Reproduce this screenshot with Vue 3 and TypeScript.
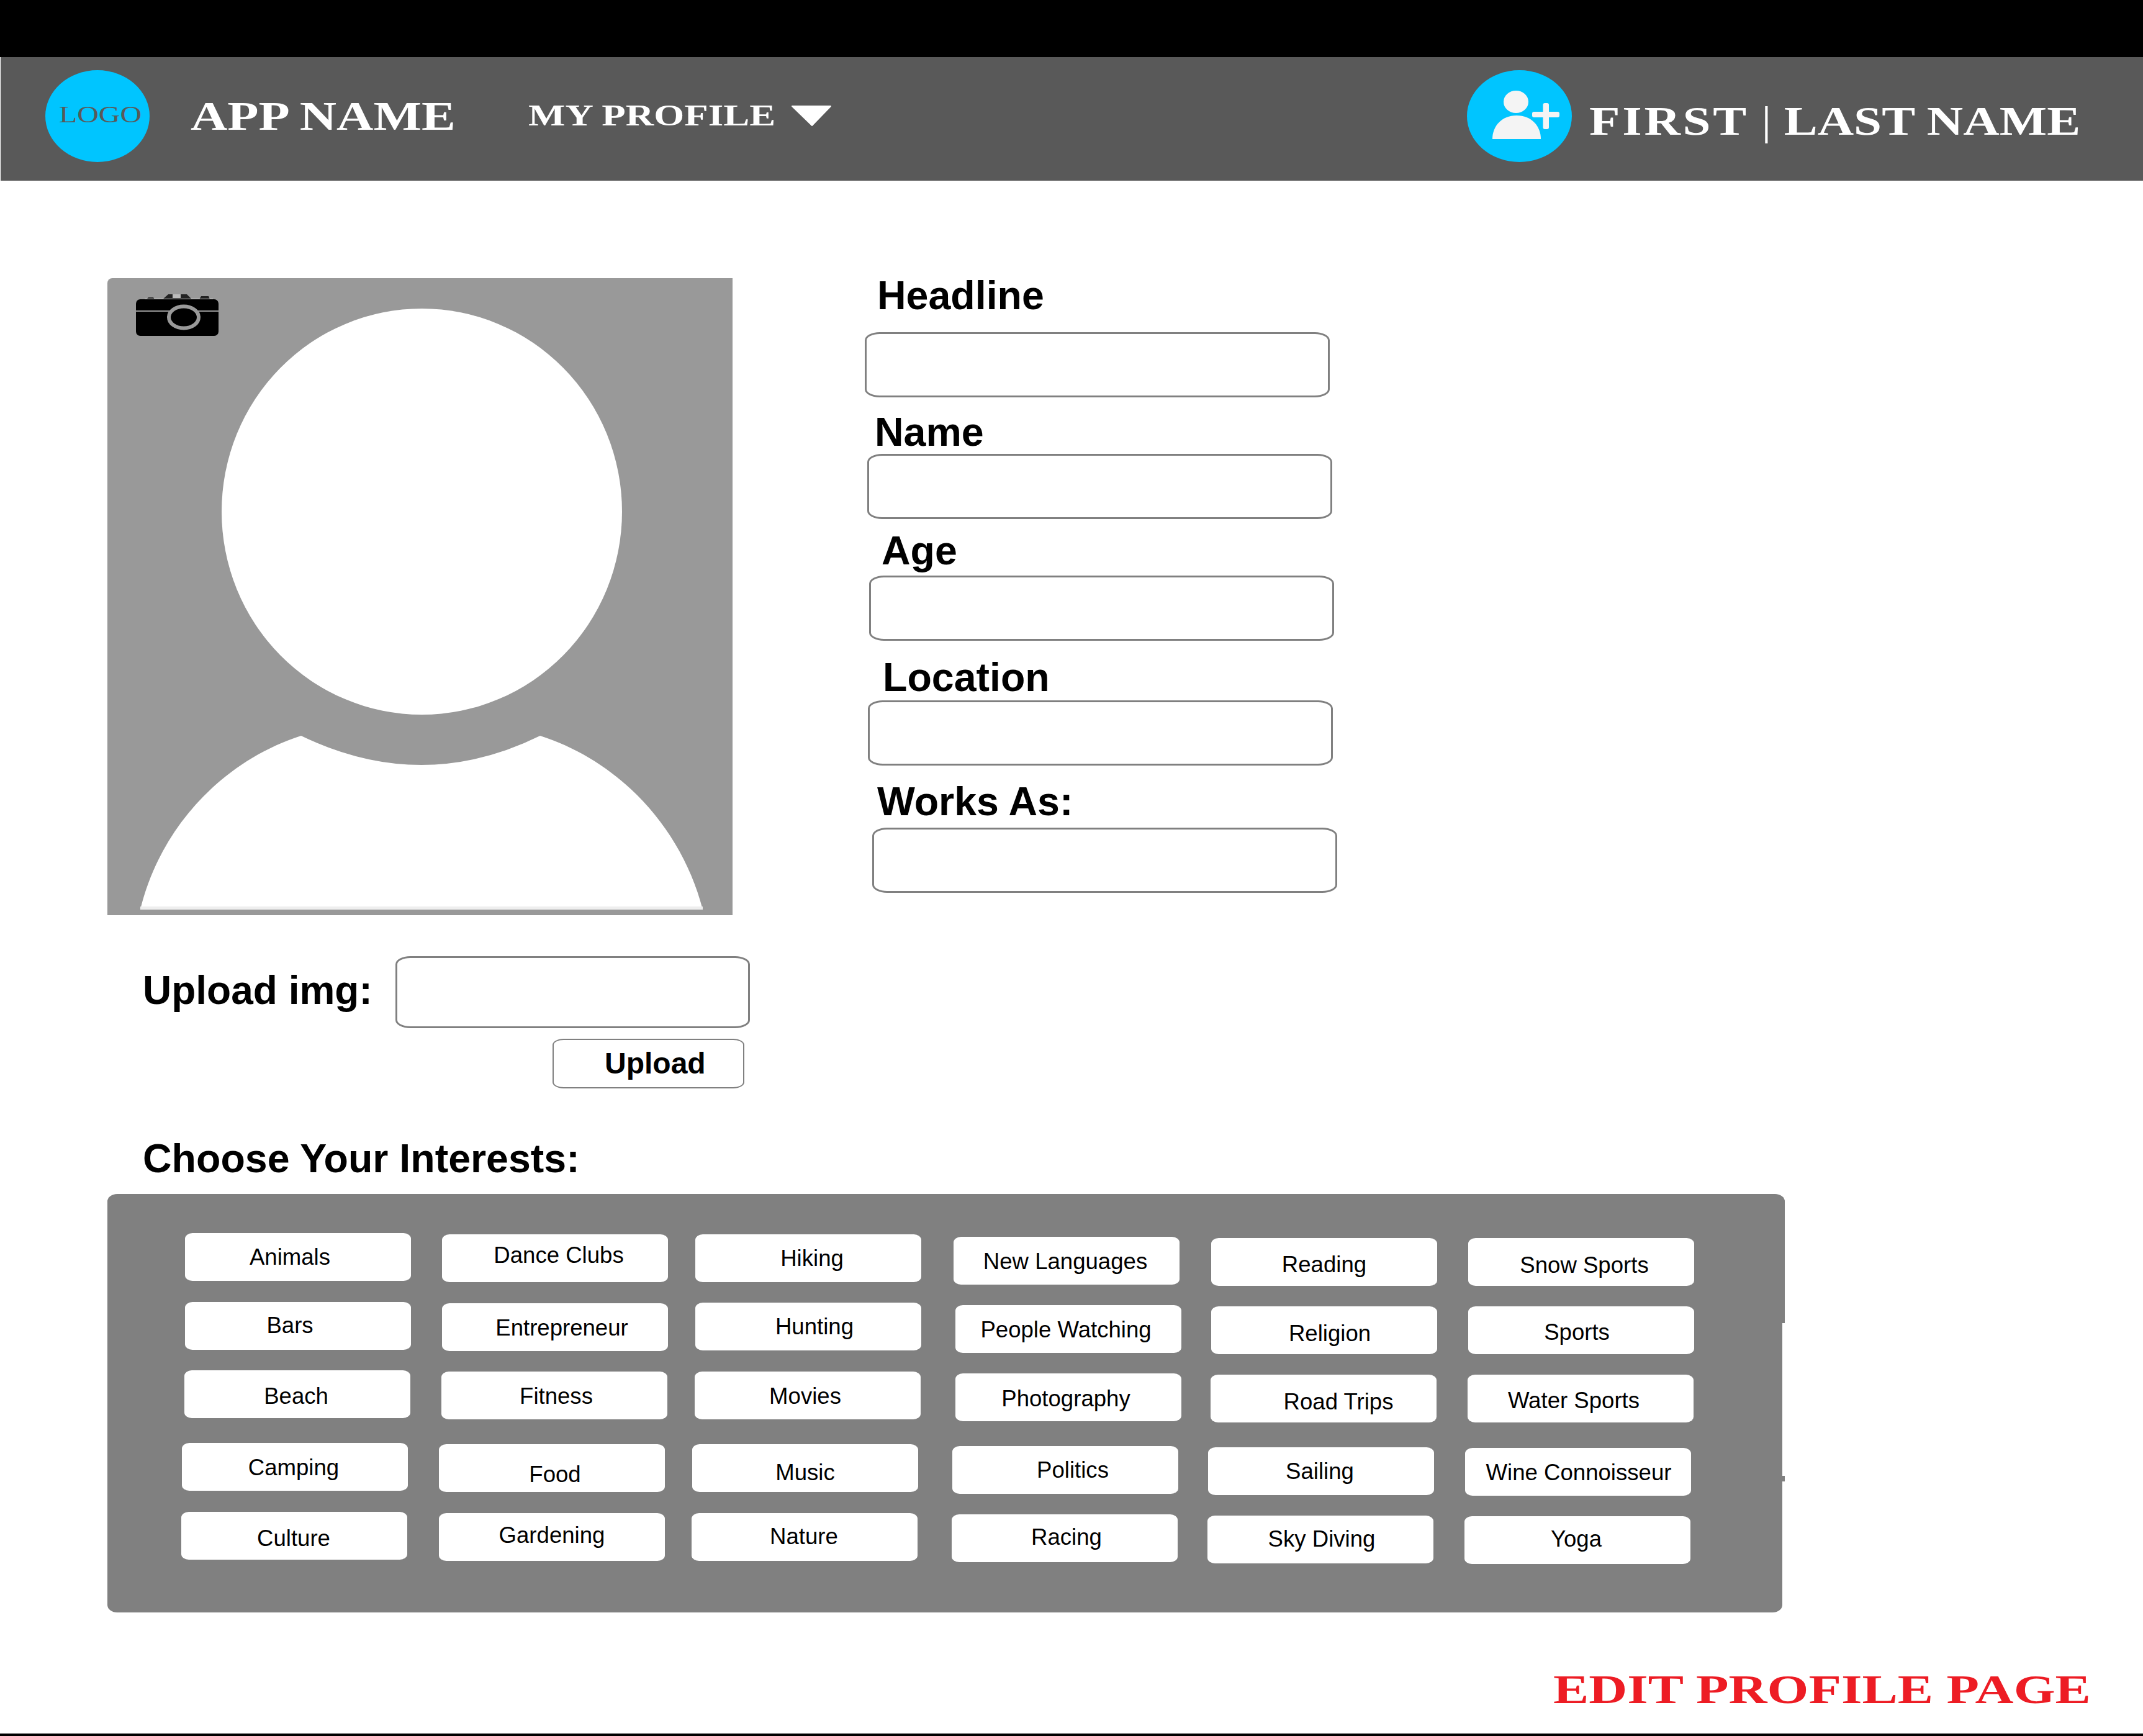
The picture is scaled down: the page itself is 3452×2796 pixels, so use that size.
<script setup lang="ts">
// [label, tag x, tag y, text centre x, text baseline], measured on the page
type TagRow = [string, number, number, number, number];

const tagRows: TagRow[] = [
  ['Animals', 298, 1986, 467, 2037],
  ['Dance Clubs', 712, 1988, 900, 2034],
  ['Hiking', 1120, 1988, 1308, 2039],
  ['New Languages', 1536, 1992, 1716, 2044],
  ['Reading', 1951, 1994, 2133, 2049],
  ['Snow Sports', 2365, 1994, 2552, 2050],
  ['Bars', 298, 2097, 467, 2147],
  ['Entrepreneur', 712, 2099, 905, 2151],
  ['Hunting', 1120, 2098, 1312, 2149],
  ['People Watching', 1539, 2102, 1717, 2154],
  ['Religion', 1951, 2104, 2142, 2160],
  ['Sports', 2365, 2104, 2540, 2158],
  ['Beach', 297, 2207, 477, 2261],
  ['Fitness', 711, 2209, 896, 2261],
  ['Movies', 1119, 2209, 1297, 2261],
  ['Photography', 1539, 2212, 1717, 2265],
  ['Road Trips', 1950, 2214, 2156, 2270],
  ['Water Sports', 2364, 2214, 2535, 2268],
  ['Camping', 293, 2324, 473, 2376],
  ['Food', 707, 2326, 894, 2387],
  ['Music', 1115, 2326, 1297, 2384],
  ['Politics', 1534, 2329, 1728, 2380],
  ['Sailing', 1946, 2331, 2126, 2382],
  ['Wine Connoisseur', 2360, 2332, 2543, 2384],
  ['Culture', 292, 2435, 473, 2490],
  ['Gardening', 707, 2437, 889, 2485],
  ['Nature', 1114, 2437, 1295, 2487],
  ['Racing', 1533, 2439, 1718, 2488],
  ['Sky Diving', 1945, 2441, 2129, 2491],
  ['Yoga', 2359, 2442, 2539, 2491],
];

const tags = tagRows.map(([label, x, y, tx, base], i) => {
  const col = i % 6;
  const row = Math.floor(i / 6);
  return {
    label,
    box: `translate(${x - (298 + col * 414)}px, ${y - (1986 + row * 110)}px)`,
    text: `translate(${tx - (x + 182)}px, ${base - (y + 51)}px)`,
  };
});

const fields = [
  { label: 'Headline', labelX: 20, inputX: 0, top: 0, gap: 27 },
  { label: 'Name', labelX: 16, inputX: 4, top: 24, gap: 3 },
  { label: 'Age', labelX: 27, inputX: 7, top: 19, gap: 8 },
  { label: 'Location', labelX: 29, inputX: 5, top: 27, gap: 5 },
  { label: 'Works As:', labelX: 20, inputX: 12, top: 26, gap: 10 },
];
</script>

<template>
  <div class="page">
    <div class="header">
      <div class="logo"><span class="logo-text">LOGO</span></div>
      <div class="app-name"><span class="wide app-name-text">APP NAME</span></div>
      <div class="menu"><span class="wide menu-text">MY PROFILE</span></div>
      <svg class="caret" viewBox="0 0 64 33">
        <path d="M1 1 H63 L33 32 Z" fill="#fff" stroke="#fff" stroke-width="2" stroke-linejoin="round" />
      </svg>
      <div class="user">
        <svg class="avatar" viewBox="0 0 169 148">
          <ellipse cx="84.5" cy="74" rx="84.5" ry="74" fill="#00c5ff" />
          <ellipse cx="79" cy="51" rx="20" ry="18" fill="#f4f4f4" />
          <path d="M41 111 C41 90 56 73 80 73 C104 73 119 90 119 111 Z" fill="#f4f4f4" />
          <rect x="105" y="67" width="44" height="9" rx="3" fill="#f4f4f4" />
          <rect x="122.5" y="53" width="9.5" height="42" rx="3" fill="#f4f4f4" />
        </svg>
        <span class="wide user-name"><span class="first-name">FIRST</span> <span class="sep">|</span> LAST NAME</span>
      </div>
    </div>

    <div class="profile">
      <div class="left">
        <svg class="photo" viewBox="0 0 1007 1026">
          <rect width="1007" height="1026" fill="#999" />
          <ellipse cx="506.5" cy="376" rx="322.5" ry="327" fill="#fff" />
          <path d="M53 1017 C85 885 185 778 312 737 Q507 831 697 737 C825 778 925 885 959 1017 Z" fill="#fff" />
          <rect x="53" y="1012" width="906" height="5" fill="#eee" />
          <path d="M63 34 L66 31 H74 L76 34 Z M89 34 L98 26 H128 L136 34 Z M148 34 L151 29 H163 L165 34 Z" fill="#222" />
          <rect x="105" y="26" width="13" height="6" fill="#bbb" />
          <rect x="60" y="33" width="110" height="1" fill="#ddd" />
          <rect x="46" y="34" width="133" height="59" rx="7" fill="#000" />
          <rect x="46" y="52" width="133" height="2" fill="#999" />
          <ellipse cx="123" cy="63" rx="24" ry="17.5" fill="#000" stroke="#999" stroke-width="6" />
        </svg>
        <div class="upload-row">
          <span class="label upload-label">Upload img:</span>
          <div class="input upload-input"></div>
        </div>
        <div class="upload-btn"><span>Upload</span></div>
      </div>

      <div class="form">
        <template v-for="f in fields" :key="f.label">
          <div class="label" :style="{ marginLeft: f.labelX + 'px', marginTop: f.top + 'px', marginBottom: f.gap + 'px' }">{{ f.label }}</div>
          <div class="input field-input" :style="{ marginLeft: f.inputX + 'px' }"></div>
        </template>
      </div>
    </div>

    <div class="label interests-title">Choose Your Interests:</div>
    <div class="interests">
      <div v-for="t in tags" :key="t.label" class="tag" :style="{ transform: t.box }">
        <span :style="{ transform: t.text }">{{ t.label }}</span>
      </div>
    </div>

    <div class="footer"><span class="wide footer-text">EDIT PROFILE PAGE</span></div>
    <div class="bottom-line"></div>
  </div>
</template>

<style scoped>
.page {
  width: 3452px;
  height: 2796px;
  background: #fff;
  overflow: hidden;
  border-top: 92px solid #000;
  box-sizing: border-box;
  font-family: "Liberation Sans", Arial, sans-serif;
  color: #000;
}

.wide {
  display: inline-block;
  font-family: "Liberation Serif", "Times New Roman", serif;
  font-weight: 700;
  line-height: 1;
  white-space: nowrap;
  transform-origin: left center;
}

.header {
  height: 199px;
  margin-left: 1px;
  background: #595959;
  display: flex;
  align-items: center;
  color: #fff;
}

.logo {
  width: 168px;
  height: 148px;
  margin-left: 72px;
  border-radius: 50%;
  background: #00c5ff;
  margin-bottom: 9px;
  flex: none;
  position: relative;
}

.logo-text {
  position: absolute;
  left: 22px;
  top: 52px;
  font-family: "Liberation Serif", "Times New Roman", serif;
  font-size: 38px;
  line-height: 1;
  color: #595959;
  transform: scaleX(1.26);
  transform-origin: left center;
}

.app-name {
  width: 544px;
  margin-left: 66px;
  margin-bottom: 9px;
  flex: none;
}

.app-name-text {
  font-size: 66px;
  transform: scaleX(1.245);
}

.menu {
  width: 424px;
  margin-bottom: 11px;
  flex: none;
}

.menu-text {
  font-size: 48px;
  transform: scaleX(1.312);
}

.caret {
  width: 64px;
  height: 33px;
  margin-bottom: 11px;
  flex: none;
}

.user {
  width: 1089px;
  margin-left: auto;
  margin-bottom: 9px;
  display: flex;
  align-items: center;
  flex: none;
}

.avatar {
  width: 169px;
  height: 148px;
  flex: none;
}

.user-name {
  margin-left: 28px;
  margin-top: 16px;
  font-size: 65px;
  transform: scaleX(1.245);
}

.first-name {
  letter-spacing: 3px;
}

.sep {
  font-weight: 400;
}

.profile {
  display: flex;
  padding: 153px 0 0 173px;
}

.left {
  width: 1220px;
  flex: none;
  padding-top: 4px;
}

.photo {
  display: block;
  width: 1007px;
  height: 1026px;
  border-top-left-radius: 8px;
}

.label {
  font-size: 64.5px;
  font-weight: 700;
  line-height: 64px;
  white-space: nowrap;
}

.input {
  box-sizing: border-box;
  border: 3px solid #808080;
  border-radius: 24px / 13px;
  background: #fff;
}

.field-input {
  width: 749px;
  height: 105px;
}

.upload-row {
  display: flex;
  margin-top: 66px;
  margin-left: 57px;
}

.upload-label {
  width: 407px;
  padding-top: 23px;
  font-size: 64px;
}

.upload-input {
  width: 571px;
  height: 116px;
}

.upload-btn {
  box-sizing: border-box;
  width: 309px;
  height: 80px;
  margin: 17px 0 0 717px;
  border: 2px solid #808080;
  border-radius: 18px / 10px;
  font-size: 48px;
  font-weight: 700;
  line-height: 76px;
  padding-left: 82px;
}

.form {
  width: 800px;
}

.interests-title {
  margin: 81px 0 0 230px;
}

.interests {
  position: relative;
  box-sizing: border-box;
  width: 2698px;
  height: 674px;
  margin: 25px 0 0 173px;
  padding: 63px 0 0 125px;
  border-radius: 16px / 12px;
  background: #808080;
  display: grid;
  grid-template-columns: repeat(6, 364px);
  grid-auto-rows: 77px;
  column-gap: 50px;
  row-gap: 33px;
}

/* top of the panel sticks out a few pixels on the right */
.interests::before {
  content: "";
  position: absolute;
  top: 0;
  right: -4px;
  width: 30px;
  height: 208px;
  border-top-right-radius: 16px 12px;
  background: #808080;
}

/* small nub further down the right edge */
.interests::after {
  content: "";
  position: absolute;
  top: 454px;
  right: -4px;
  width: 4px;
  height: 9px;
  background: #808080;
}

.tag {
  border-radius: 12px / 9px;
  background: #fff;
  font-size: 36.6px;
  line-height: 77px;
  text-align: center;
  white-space: nowrap;
}

.tag span {
  display: inline-block;
}

.footer {
  display: flex;
  margin: 91px 0 0 2502px;
  color: #ed1c24;
}

.footer-text {
  font-size: 66px;
  transform: scaleX(1.302);
}

.bottom-line {
  height: 4px;
  margin-top: 38px;
  background: #000;
}
</style>

<style>
html,
body {
  margin: 0;
  background: #fff;
}
</style>
